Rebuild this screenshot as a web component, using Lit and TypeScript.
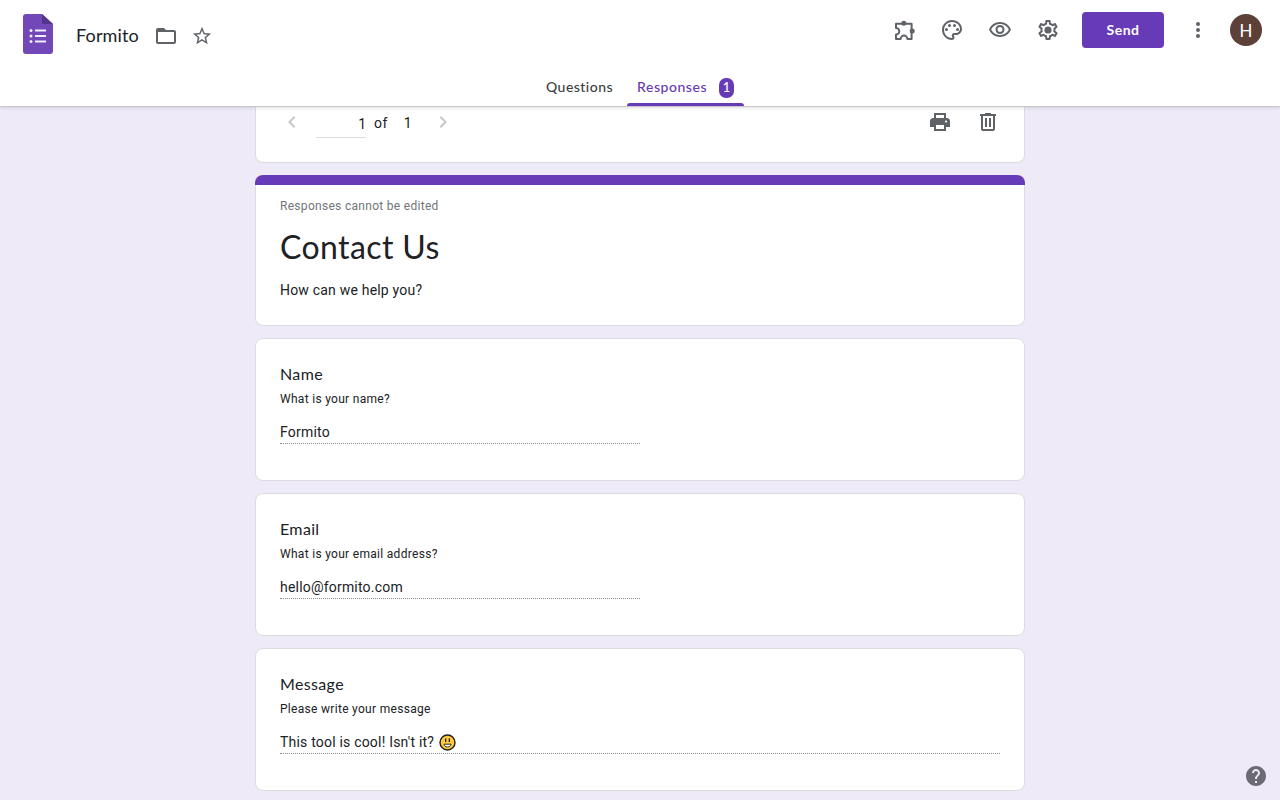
import { LitElement, css, html, svg } from "lit";
import { customElement, property } from "lit/decorators.js";
import { classMap } from "lit/directives/class-map.js";

const icons = {
  folder: svg`<path d="M20 6h-8l-2-2H4c-1.1 0-1.99.9-1.99 2L2 18c0 1.1.9 2 2 2h16c1.1 0 2-.9 2-2V8c0-1.1-.9-2-2-2zm0 12H4V8h16v10z"/>`,
  star: svg`<path d="M22 9.24l-7.19-.62L12 2 9.19 8.63 2 9.24l5.46 4.73L5.82 21 12 17.27 18.18 21l-1.63-7.03L22 9.24zM12 15.4l-3.76 2.27 1-4.28-3.32-2.88 4.38-.38L12 6.1l1.71 4.04 4.38.38-3.32 2.88 1 4.28L12 15.4z"/>`,
  addons: svg`
    <path fill="none" stroke="currentColor" stroke-width="2" stroke-linejoin="round" d="M4 5.8h15.6V21h-4.2a3.4 3.4 0 0 0-6.8 0H4v-4.4a3.3 3.3 0 0 0 0-6.6z"/>
    <circle cx="11.8" cy="5.2" r="2.5"/>
    <circle cx="20.2" cy="13" r="2.5"/>
  `,
  palette: svg`<path d="M12 22C6.49 22 2 17.51 2 12S6.49 2 12 2s10 4.04 10 9c0 3.31-2.69 6-6 6h-1.77c-.28 0-.5.22-.5.5 0 .12.05.23.13.33.41.47.64 1.06.64 1.67 0 1.38-1.12 2.5-2.5 2.5zm0-18c-4.41 0-8 3.59-8 8s3.59 8 8 8c.28 0 .5-.22.5-.5 0-.16-.08-.28-.14-.35-.41-.46-.63-1.05-.63-1.65 0-1.38 1.12-2.5 2.5-2.5H16c2.21 0 4-1.79 4-4 0-3.86-3.59-7-8-7z"/><circle cx="6.5" cy="11.5" r="1.5"/><circle cx="9.5" cy="7.5" r="1.5"/><circle cx="14.5" cy="7.5" r="1.5"/><circle cx="17.5" cy="11.5" r="1.5"/>`,
  preview: svg`<path d="M12 6c3.79 0 7.17 2.13 8.82 5.5C19.17 14.87 15.79 17 12 17s-7.17-2.13-8.82-5.5C4.83 8.13 8.21 6 12 6m0-2C7 4 2.73 7.11 1 11.5 2.73 15.89 7 19 12 19s9.27-3.11 11-7.5C21.27 7.11 17 4 12 4zm0 5c1.38 0 2.5 1.12 2.5 2.5S13.38 14 12 14s-2.5-1.12-2.5-2.5S10.62 9 12 9m0-2c-2.48 0-4.5 2.02-4.5 4.5S9.52 16 12 16s4.5-2.02 4.5-4.5S14.48 7 12 7z"/>`,
  settings: svg`<path d="M19.43 12.98c.04-.32.07-.64.07-.98 0-.34-.03-.66-.07-.98l2.11-1.65c.19-.15.24-.42.12-.64l-2-3.46c-.09-.16-.26-.25-.44-.25-.06 0-.12.01-.17.03l-2.49 1c-.52-.4-1.08-.73-1.69-.98l-.38-2.65C14.46 2.18 14.25 2 14 2h-4c-.25 0-.46.18-.49.42l-.38 2.65c-.61.25-1.17.59-1.69.98l-2.49-1c-.06-.02-.12-.03-.18-.03-.17 0-.34.09-.43.25l-2 3.46c-.13.22-.07.49.12.64l2.11 1.65c-.04.32-.07.65-.07.98 0 .33.03.66.07.98l-2.11 1.65c-.19.15-.24.42-.12.64l2 3.46c.09.16.26.25.44.25.06 0 .12-.01.17-.03l2.49-1c.52.4 1.08.73 1.69.98l.38 2.65c.03.24.24.42.49.42h4c.25 0 .46-.18.49-.42l.38-2.65c.61-.25 1.17-.59 1.69-.98l2.49 1c.06.02.12.03.18.03.17 0 .34-.09.43-.25l2-3.46c.12-.22.07-.49-.12-.64l-2.11-1.65zm-1.98-1.71c.04.31.05.52.05.73 0 .21-.02.43-.05.73l-.14 1.13.89.7 1.08.84-.7 1.21-1.27-.51-1.04-.42-.9.68c-.43.32-.84.56-1.25.73l-1.06.43-.16 1.13-.2 1.35h-1.4l-.19-1.35-.16-1.13-1.06-.43c-.43-.18-.83-.41-1.23-.71l-.91-.7-1.06.43-1.27.51-.7-1.21 1.08-.84.89-.7-.14-1.13c-.03-.31-.05-.54-.05-.74s.02-.43.05-.73l.14-1.13-.89-.7-1.08-.84.7-1.21 1.27.51 1.04.42.9-.68c.43-.32.84-.56 1.25-.73l1.06-.43.16-1.13.2-1.35h1.39l.19 1.35.16 1.13 1.06.43c.43.18.83.41 1.23.71l.91.7 1.06-.43 1.27-.51.7 1.21-1.07.85-.89.7.14 1.13z"/><circle cx="12" cy="12" r="3.6"/>`,
  more: svg`<circle cx="12" cy="6" r="2"/><circle cx="12" cy="12" r="2"/><circle cx="12" cy="18" r="2"/>`,
  prev: svg`<path d="M15.41 7.41L14 6l-6 6 6 6 1.41-1.41L10.83 12z"/>`,
  next: svg`<path d="M10 6L8.59 7.41 13.17 12l-4.58 4.59L10 18l6-6z"/>`,
  print: svg`<path d="M18 3H6v5h12V3zm-2 5H8V5h8v3z"/><path d="M19 8H5c-1.66 0-3 1.34-3 3v6h4v4h12v-4h4v-6c0-1.66-1.34-3-3-3zm-3 11H8v-4h8v4zm2-6.5c-.55 0-1-.45-1-1s.45-1 1-1 1 .45 1 1-.45 1-1 1z"/>`,
  trash: svg`<path d="M15 4V3H9v1H4v2h1v13c0 1.1.9 2 2 2h10c1.1 0 2-.9 2-2V6h1V4h-5zm2 15H7V6h10v13zM9 8h2v9H9zm4 0h2v9h-2z"/>`,
  help: svg`<path d="M12 2C6.48 2 2 6.48 2 12s4.48 10 10 10 10-4.48 10-10S17.52 2 12 2zm1 17h-2v-2h2v2zm2.07-7.75l-.9.92C13.45 12.9 13 13.5 13 15h-2v-.5c0-1.1.45-2.1 1.17-2.83l1.24-1.26c.37-.36.59-.86.59-1.41 0-1.1-.9-2-2-2s-2 .9-2 2H8c0-2.21 1.79-4 4-4s4 1.79 4 4c0 .88-.36 1.68-.93 2.25z"/>`,
};

@customElement("form-icon")
class FormIcon extends LitElement {
  static styles = css`
    :host {
      display: block;
      width: 24px;
      height: 24px;
      color: #5f6368;
    }

    svg {
      display: block;
      width: 100%;
      height: 100%;
      fill: currentColor;
    }
  `;

  @property() name: keyof typeof icons = "folder";

  render() {
    return html`<svg viewBox="0 0 24 24" aria-hidden="true">${icons[this.name]}</svg>`;
  }
}

@customElement("form-header")
class FormHeader extends LitElement {
  static styles = css`
    :host {
      display: flex;
      flex-direction: column;
      justify-content: space-between;
      box-sizing: border-box;
      height: 107px;
      background: #fff;
      border-bottom: 1px solid #c9c7ce;
      box-shadow: 0 1px 3px rgba(60, 64, 67, 0.16);
      font-family: Lato, sans-serif;
    }

    .bar {
      display: flex;
      justify-content: space-between;
      padding: 12px 18px 0 23px;
    }

    .document {
      display: flex;
      align-items: center;
      height: 48px;
    }

    .logo {
      width: 30px;
      height: 40px;
      margin: -4px 23px 0 0;
    }

    .name {
      width: 78px;
      padding-bottom: 2px;
      font-size: 18px;
      letter-spacing: 0.15px;
      color: #202124;
      white-space: nowrap;
    }

    .star {
      width: 22px;
      height: 22px;
      margin-left: 13px;
    }

    .actions {
      display: flex;
      align-items: center;
      height: 36px;
    }

    .tools {
      display: flex;
      gap: 24px;
      margin-right: 22px;
    }

    .send {
      width: 82px;
      height: 36px;
      padding: 0 0 2px;
      border: 0;
      border-radius: 4px;
      background: #673ab7;
      color: #fff;
      font: 700 14px Lato, sans-serif;
      letter-spacing: 0.5px;
    }

    .more {
      margin: 0 20px 0 22px;
    }

    .avatar {
      width: 32px;
      height: 32px;
      border-radius: 50%;
      background: #5d4037;
      color: #fff;
      font: 18px/33px Roboto, sans-serif;
      text-align: center;
    }

    .tabs {
      display: flex;
      justify-content: center;
      gap: 4px;
    }

    .tab {
      display: flex;
      align-items: center;
      box-sizing: border-box;
      height: 36px;
      padding: 0 10px;
      border-bottom: 3px solid transparent;
      font-size: 14px;
      font-weight: 500;
      color: #3c4043;
    }

    .tab .label {
      width: 67px;
      letter-spacing: 0.47px;
      white-space: nowrap;
    }

    .tab.active {
      color: #673ab7;
      position: relative;
    }

    .tab.active .label {
      width: 70px;
      letter-spacing: 0.55px;
    }

    .tab.active::after {
      content: "";
      position: absolute;
      left: 0;
      right: 0;
      bottom: -3px;
      height: 3px;
      border-radius: 3px 3px 0 0;
      background: #673ab7;
    }

    .count {
      width: 15px;
      height: 20px;
      margin: 2px 0 0 12px;
      border-radius: 7px;
      background: #673ab7;
      color: #fff;
      font-size: 13px;
      line-height: 19px;
      text-align: center;
    }
  `;

  render() {
    return html`
      <div class="bar">
        <div class="document">
          <svg class="logo" viewBox="0 0 30 40" aria-hidden="true">
            <path fill="#7248b9" d="M3 0h16l11 10v27a3 3 0 0 1-3 3H3a3 3 0 0 1-3-3V3a3 3 0 0 1 3-3z"/>
            <path fill="#54358b" d="M19 0l11 10H19z"/>
            <path fill="#f1edf8" d="M12 15.5h11v2H12zm0 5.5h11v2H12zm0 5.5h11v2H12z"/>
            <g fill="#f1edf8">
              <circle cx="8" cy="16.5" r="1.5"/>
              <circle cx="8" cy="22" r="1.5"/>
              <circle cx="8" cy="27.5" r="1.5"/>
            </g>
          </svg>
          <span class="name">Formito</span>
          <form-icon name="folder"></form-icon>
          <form-icon class="star" name="star"></form-icon>
        </div>
        <div class="actions">
          <div class="tools">
            <form-icon name="addons"></form-icon>
            <form-icon name="palette"></form-icon>
            <form-icon name="preview"></form-icon>
            <form-icon name="settings"></form-icon>
          </div>
          <button class="send">Send</button>
          <form-icon class="more" name="more"></form-icon>
          <div class="avatar">H</div>
        </div>
      </div>
      <nav class="tabs">
        <div class="tab"><span class="label">Questions</span></div>
        <div class="tab active">
          <span class="label">Responses</span>
          <span class="count">1</span>
        </div>
      </nav>
    `;
  }
}

@customElement("form-answer")
class FormAnswer extends LitElement {
  static styles = css`
    :host {
      display: block;
      box-sizing: border-box;
      height: 143px;
      padding: 23px 24px 0;
      border: 1px solid #dadce0;
      border-radius: 8px;
      background: #fff;
      color: #202124;
      font-family: Roboto, sans-serif;
    }

    .title {
      font: 16px/24px Lato, sans-serif;
      letter-spacing: 0.35px;
    }

    .description {
      margin-top: 5px;
      font-size: 12px;
      line-height: 16px;
      letter-spacing: 0.3px;
    }

    .value {
      display: flex;
      align-items: center;
      box-sizing: border-box;
      width: 360px;
      height: 23px;
      margin-top: 14px;
      border-bottom: 1px dotted #8b8d91;
      font-size: 14px;
      line-height: 22px;
      letter-spacing: 0.2px;
    }

    .value.long {
      width: 100%;
    }

    .emoji {
      width: 17px;
      height: 17px;
      margin-left: 5px;
    }
  `;

  @property() label = "";
  @property() description = "";
  @property() value = "";
  @property({ type: Boolean }) long = false;
  @property({ type: Boolean }) smile = false;

  render() {
    return html`
      <div class="title">${this.label}</div>
      <div class="description">${this.description}</div>
      <div class=${classMap({ value: true, long: this.long })}>
        <span>${this.value}</span>
        ${this.smile
          ? html`
              <svg class="emoji" viewBox="0 0 17 17" role="img" aria-label="😀">
                <circle cx="8.5" cy="8.5" r="7.5" fill="#ffc83d" stroke="#202020" stroke-width="1.4"/>
                <path fill="#202020" d="M6 4.5h1.3V8H6zM9.700 4.500H11V8H9.700z"/>
                <path fill="#fff" stroke="#202020" stroke-width=".9" d="M5 10.200h7c-.2 1.800-1.500 2.800-3.500 2.800s-3.300-1-3.500-2.800z"/>
              </svg>
            `
          : null}
      </div>
    `;
  }
}

@customElement("app-root")
class AppRoot extends LitElement {
  static styles = css`
    :host {
      display: flex;
      flex-direction: column;
      position: relative;
      height: 100vh;
      overflow: hidden;
      background: #eeeaf8;
      color: #202124;
      font-family: Roboto, sans-serif;
    }

    form-header {
      flex: none;
      z-index: 1;
    }

    main {
      display: flex;
      flex-direction: column;
      gap: 12px;
      width: 770px;
      margin: 0 auto;
    }

    .pager {
      display: flex;
      justify-content: space-between;
      box-sizing: border-box;
      height: 56px;
      padding: 3px 24px 0;
      border: 1px solid #dadce0;
      border-top: 0;
      border-radius: 0 0 8px 8px;
      background: #fff;
    }

    .pages,
    .tools {
      display: flex;
    }

    .pages form-icon {
      color: #c6c7c9;
    }

    .pages .next {
      margin-left: 19px;
    }

    .page {
      box-sizing: border-box;
      width: 50px;
      height: 28px;
      margin-left: 12px;
      border-bottom: 1px solid #dadce0;
      font-size: 14px;
      line-height: 28px;
      text-align: right;
    }

    .total {
      display: flex;
      gap: 16px;
      margin-left: 8px;
      font-size: 14px;
      line-height: 26px;
      letter-spacing: 0.5px;
    }

    .tools {
      gap: 24px;
    }

    .intro {
      height: 151px;
    }

    .stripe {
      height: 10px;
      border-radius: 8px 8px 0 0;
      background: #673ab7;
    }

    .summary {
      box-sizing: border-box;
      height: 141px;
      padding: 13px 24px 0;
      border: 1px solid #dadce0;
      border-top: 0;
      border-radius: 0 0 8px 8px;
      background: #fff;
    }

    .notice {
      color: #70757a;
      font-size: 12px;
      line-height: 16px;
      letter-spacing: 0.3px;
    }

    h1 {
      margin: 12px 0 0;
      font: 32px/42px Lato, sans-serif;
      letter-spacing: 0.4px;
    }

    .subtitle {
      margin-top: 12px;
      font-size: 14px;
      line-height: 20px;
      letter-spacing: 0.2px;
    }

    .help {
      position: absolute;
      right: 12px;
      bottom: 12px;
      color: #6c6a72;
    }
  `;

  render() {
    return html`
      <form-header></form-header>
      <main>
        <section class="pager">
          <div class="pages">
            <form-icon name="prev"></form-icon>
            <div class="page">1</div>
            <div class="total"><span>of</span><span>1</span></div>
            <form-icon class="next" name="next"></form-icon>
          </div>
          <div class="tools">
            <form-icon name="print"></form-icon>
            <form-icon name="trash"></form-icon>
          </div>
        </section>
        <section class="intro">
          <div class="stripe"></div>
          <div class="summary">
            <div class="notice">Responses cannot be edited</div>
            <h1>Contact Us</h1>
            <div class="subtitle">How can we help you?</div>
          </div>
        </section>
        <form-answer
          label="Name"
          description="What is your name?"
          value="Formito"
        ></form-answer>
        <form-answer
          label="Email"
          description="What is your email address?"
          value="hello@formito.com"
        ></form-answer>
        <form-answer
          label="Message"
          description="Please write your message"
          value="This tool is cool! Isn't it?"
          long
          smile
        ></form-answer>
      </main>
      <form-icon class="help" name="help"></form-icon>
    `;
  }
}
